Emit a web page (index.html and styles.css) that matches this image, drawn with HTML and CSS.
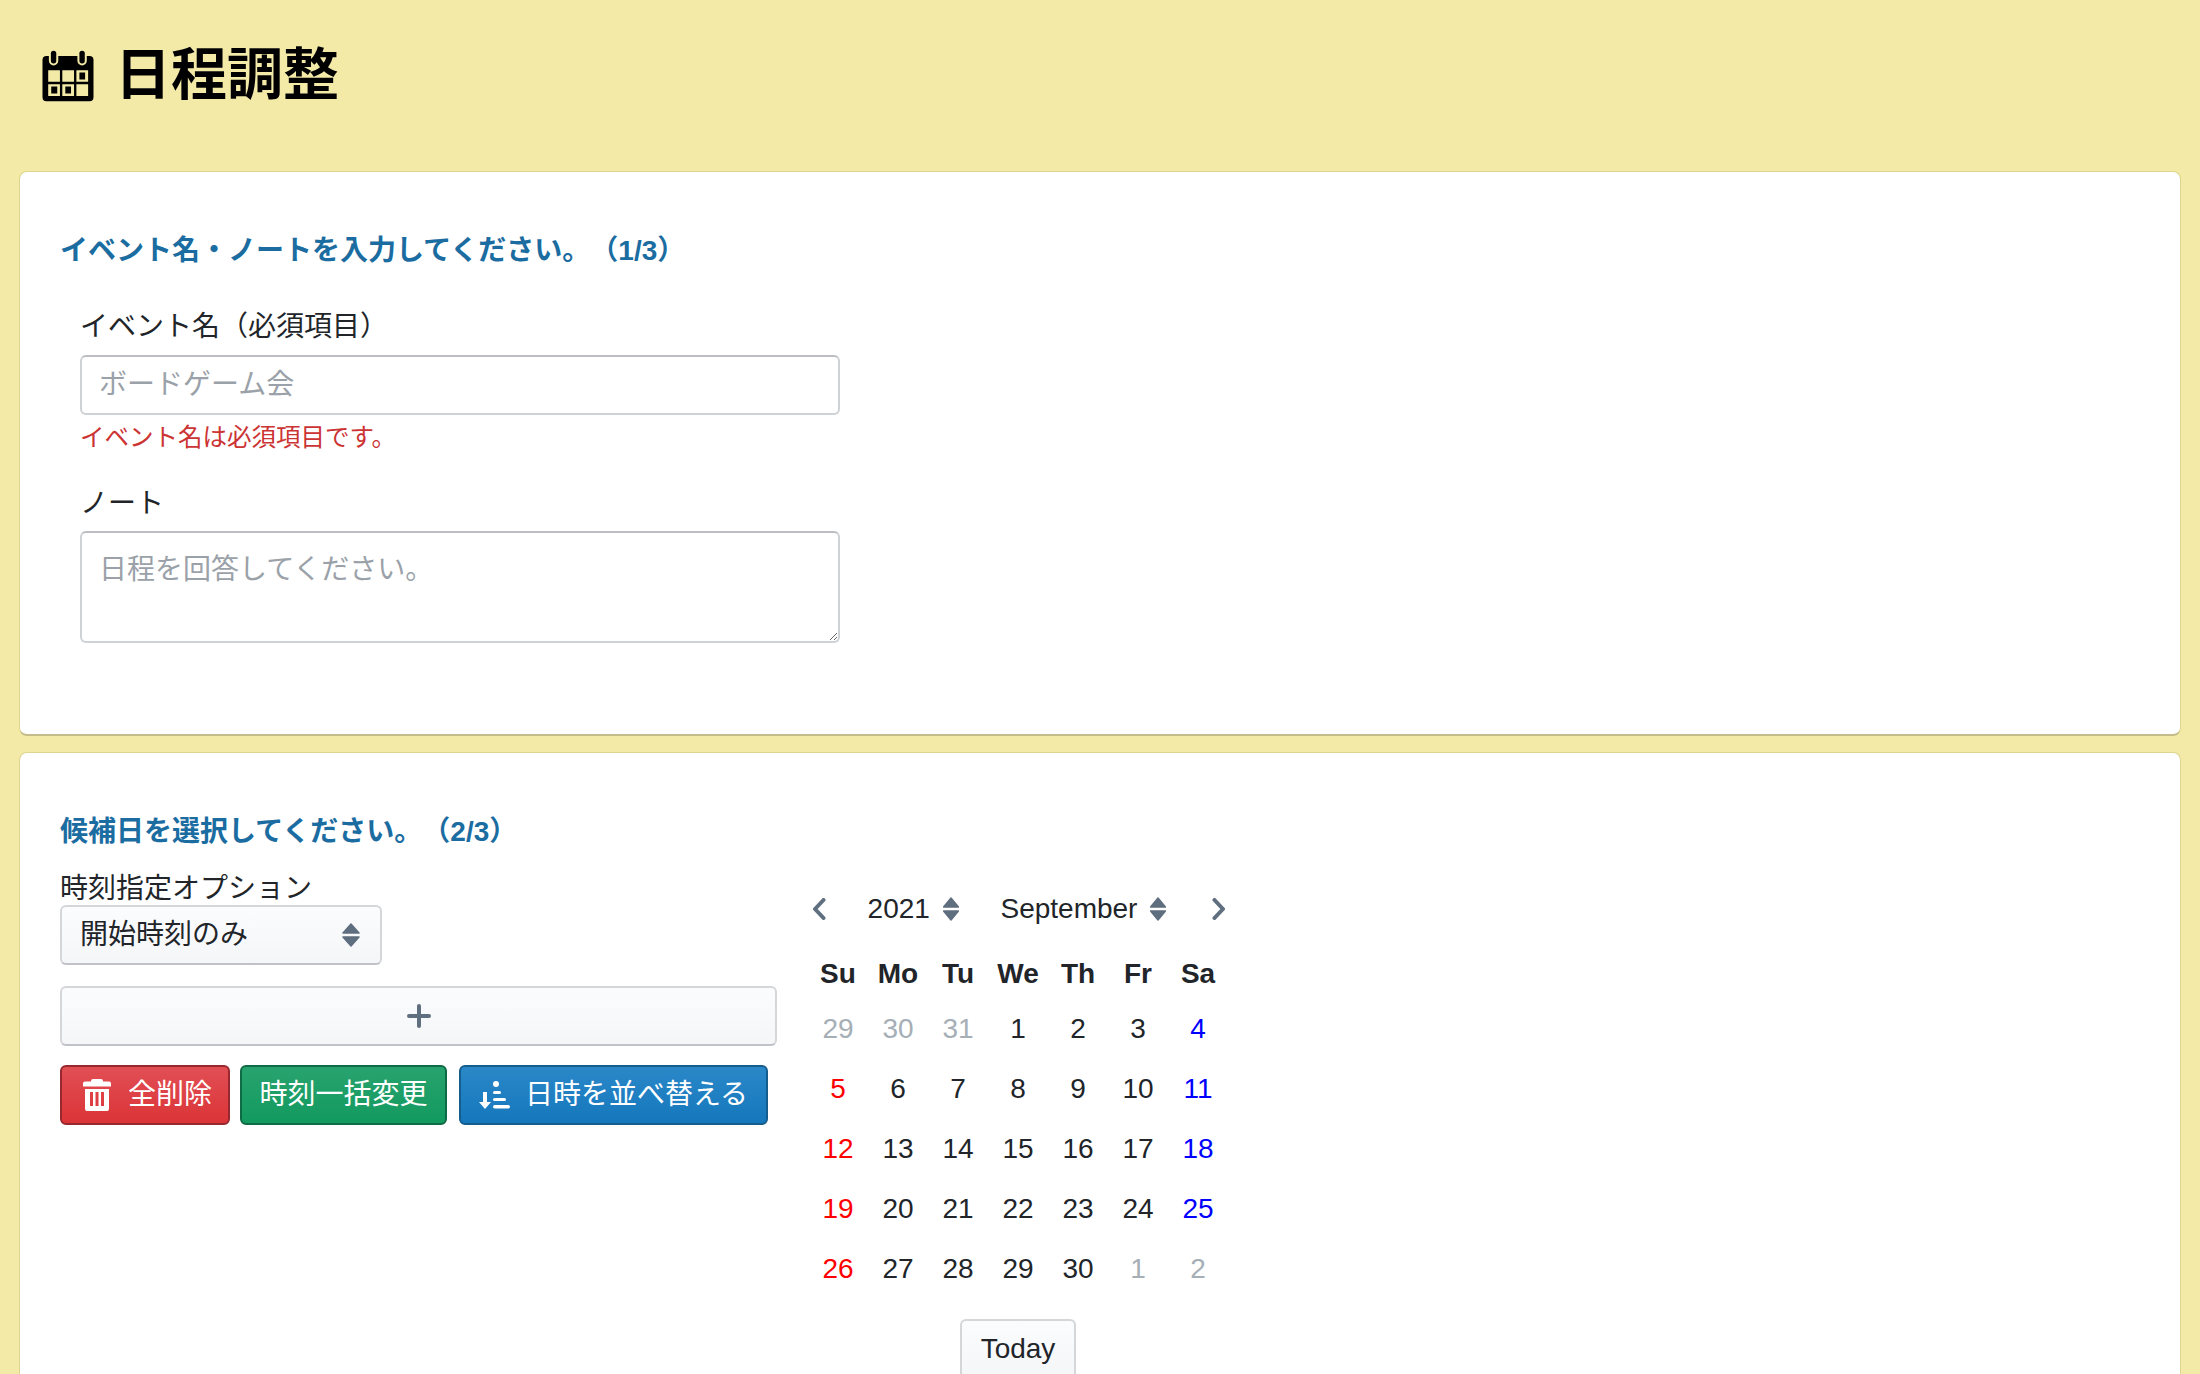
FILE: index.html
```html
<!DOCTYPE html>
<html lang="ja">
<head>
  <meta charset="UTF-8">
  <title>日程調整</title>
  <link rel="stylesheet" href="styles.css">
</head>
<body>

  <svg class="defs" aria-hidden="true">
    <symbol id="updown" viewBox="0 0 16 24">
      <path d="M8 1 15.500 10H.5Z M.5 14H15.500L8 23Z" fill="#5f6f7f" stroke="#5f6f7f" stroke-width="1.5" stroke-linejoin="round"/>
    </symbol>
  </svg>

  <header class="page-header">
    <svg class="logo" viewBox="68 60 152 155">
      <path fill="#000" fill-rule="evenodd" d="M80 78H208Q220 78 220 90V201Q220 213 208 213H80Q68 213 68 201V90Q68 78 80 78ZM85 120V155H120V120ZM127 120V155H162V120ZM169 120V155H204V120ZM85 162V197H120V162ZM127 162V197H162V162ZM169 162V197H204V162Z"/>
      <path fill="#000" d="M178 127H195V148H178ZM94 169H112V190H94ZM136 169H153V190H136Z"/>
      <rect x="87" y="58" width="28" height="48" rx="14" fill="#f3eaa8"/>
      <rect x="172" y="58" width="28" height="48" rx="14" fill="#f3eaa8"/>
      <rect x="93" y="62" width="16" height="38" rx="8" fill="#000"/>
      <rect x="178" y="62" width="16" height="38" rx="8" fill="#000"/>
    </svg>
    <h1>日程調整</h1>
  </header>

  <section class="card card-event">
    <h2>イベント名・ノートを入力してください。（1/3）</h2>
    <div class="form-block">
      <label for="eventName">イベント名（必須項目）</label>
      <input type="text" id="eventName" class="field" placeholder="ボードゲーム会">
      <p class="error">イベント名は必須項目です。</p>
      <label for="note" class="note-label">ノート</label>
      <textarea id="note" class="field note" placeholder="日程を回答してください。"></textarea>
    </div>
  </section>

  <section class="card card-dates">
    <h2>候補日を選択してください。（2/3）</h2>
    <div class="dates-row">

      <div class="dates-left">
        <label for="timeOption">時刻指定オプション</label>
        <select id="timeOption" class="time-select">
          <option>開始時刻のみ</option>
        </select>
        <button class="add-btn" aria-label="追加">
          <svg width="24" height="24" viewBox="0 0 24 24"><path d="M12 2V22M2 12H22" stroke="#5f6f7f" stroke-width="4" stroke-linecap="round"/></svg>
        </button>
        <div class="actions">
          <button class="btn btn-red">
            <svg width="28" height="32" viewBox="0 0 28 32">
              <path fill="#fff" fill-rule="evenodd" d="M8 2Q8 0 10 0H18Q20 0 20 2V2.500H26Q28 2.500 28 4.500V7.500H0V4.500Q0 2.500 2 2.500H8ZM2 10H26V30Q26 32 24 32H4Q2 32 2 30ZM7 13V27H10V13ZM12.500 13V27H15.500V13ZM18 13V27H21V13Z"/>
            </svg>
            全削除
          </button>
          <button class="btn btn-green">時刻一括変更</button>
          <button class="btn btn-blue">
            <svg width="32" height="28" viewBox="0 0 32 28">
              <path fill="#fff" d="M4 11H8V21H12L6 28 0 21H4Z"/>
              <circle cx="17" cy="3" r="3" fill="#fff"/>
              <rect x="14" y="10" width="8" height="3" rx="1.500" fill="#fff"/>
              <rect x="14" y="17" width="13" height="3" rx="1.500" fill="#fff"/>
              <rect x="14" y="24" width="17" height="3.500" rx="1.700" fill="#fff"/>
            </svg>
            日時を並べ替える
          </button>
        </div>
      </div>

      <div class="calendar">
        <div class="cal-nav">
          <svg width="14" height="22" viewBox="0 0 14 22"><path d="M11.500 2 3 11 11.500 20" fill="none" stroke="#5f6f7f" stroke-width="4" stroke-linecap="round" stroke-linejoin="round"/></svg>
          <span class="cal-pick cal-year">2021 <svg width="16" height="24"><use href="#updown"/></svg></span>
          <span class="cal-pick cal-month">September <svg width="16" height="24"><use href="#updown"/></svg></span>
          <svg width="14" height="22" viewBox="0 0 14 22"><path d="M2.500 2 11 11 2.500 20" fill="none" stroke="#5f6f7f" stroke-width="4" stroke-linecap="round" stroke-linejoin="round"/></svg>
        </div>
        <div class="cal-grid">
          <b>Su</b><b>Mo</b><b>Tu</b><b>We</b><b>Th</b><b>Fr</b><b>Sa</b>
          <span class="muted">29</span><span class="muted">30</span><span class="muted">31</span><span>1</span><span>2</span><span>3</span><span class="sat">4</span>
          <span class="sun">5</span><span>6</span><span>7</span><span>8</span><span>9</span><span>10</span><span class="sat">11</span>
          <span class="sun">12</span><span>13</span><span>14</span><span>15</span><span>16</span><span>17</span><span class="sat">18</span>
          <span class="sun">19</span><span>20</span><span>21</span><span>22</span><span>23</span><span>24</span><span class="sat">25</span>
          <span class="sun">26</span><span>27</span><span>28</span><span>29</span><span>30</span><span class="muted">1</span><span class="muted">2</span>
        </div>
        <div class="cal-foot">
          <button class="today-btn">Today</button>
        </div>
      </div>

    </div>
  </section>

</body>
</html>
```

FILE: styles.css
```css
html, body { height: 100%; overflow: hidden; }
body { margin: 0; background: #f3eaa8; color: #212529; font-family: "Liberation Sans", "Noto Sans CJK JP", sans-serif; font-size: 28px; line-height: 42px; text-spacing-trim: space-all; }
.defs { display: none; }

.page-header { height: 171px; box-sizing: border-box; padding: 50px 0 0 42px; display: flex; gap: 21px; align-items: flex-start; }
.logo { width: 52px; height: 52px; }
h1 { margin: -5px 0 0; font-size: 56px; line-height: 60px; color: #000; }

.card { margin: 0 19px 19px; background: #fff; border: 1px solid #ded68f; border-bottom: 2px solid #c4bc8a; border-radius: 8px; padding: 0 40px; }
.card-event { height: 565px; margin-bottom: 16px; box-sizing: border-box; padding-top: 58px; }
.card-dates { padding-top: 58px; padding-bottom: 100px; }
h2 { margin: 0; font-size: 28px; line-height: 42px; color: #1a6ca1; }

label { display: block; }
.form-block { padding: 34px 0 0 20px; width: 760px; }
.field { display: block; width: 100%; box-sizing: border-box; margin-top: 7px; padding: 8px 17px; border: 2px solid #cfd2d5; border-top-color: #bbbdc0; border-radius: 6px; font: inherit; color: #212529; height: 60px; background: #fff; }
.field::placeholder { color: #9aa1a8; }
.note { height: 112px; margin-top: 6px; padding-top: 16px; }
.error { margin: 6px 0 0; font-size: 24.5px; line-height: 34px; color: #cc3333; }
.note-label { margin-top: 28px; }

.dates-row { display: flex; gap: 31px; padding-top: 15px; }
.dates-left { width: 717px; }
.time-select { display: block; width: 322px; height: 60px; margin-top: -5px; padding: 0 18px; border: 2px solid #d4d6d9; border-bottom-color: #bfc2c6; border-radius: 6px; font: inherit; color: #212529; appearance: none; background: url("data:image/svg+xml,%3Csvg xmlns='http://www.w3.org/2000/svg' width='18' height='24'%3E%3Cpath d='M9 1 17 10H1Z M1 14H17L9 23Z' fill='%235f6f7f' stroke='%235f6f7f' stroke-width='1.500' stroke-linejoin='round'/%3E%3C/svg%3E") no-repeat right 20px center, linear-gradient(#fbfcfd, #f5f6f8); }
.add-btn { display: flex; align-items: center; justify-content: center; width: 100%; height: 60px; margin-top: 21px; padding: 0; border: 2px solid #d4d6d9; border-bottom-color: #bfc2c6; border-radius: 6px; background: linear-gradient(#fbfcfd, #f5f6f8); }
.actions { display: flex; gap: 10px; margin-top: 19px; }
.btn { display: flex; align-items: center; justify-content: center; gap: 17px; height: 60px; padding: 0; border-width: 2px; border-style: solid; border-radius: 6px; font: inherit; color: #fff; white-space: nowrap; }
.btn svg { flex-shrink: 0; }
.btn-red { width: 170px; justify-content: flex-start; padding-left: 21px; border-color: #98282f; background: linear-gradient(#e14f55, #db3437); }
.btn-green { width: 207px; margin-right: 2px; border-color: #0f6b45; background: linear-gradient(#28a36f, #129a5f); }
.btn-blue { width: 309px; gap: 14px; border-color: #145d8d; background: linear-gradient(#2a88c8, #1577bc); }

.calendar { width: 420px; }
.cal-nav { display: flex; align-items: center; justify-content: space-between; height: 42px; margin-top: 20px; padding: 0 2px 0 4px; }
.cal-pick { display: flex; align-items: center; gap: 13px; }
.cal-month { margin-right: 4px; }
.cal-grid { display: grid; grid-template-columns: repeat(7, 60px); grid-template-rows: 55px; grid-auto-rows: 60px; margin-top: 14px; text-align: center; line-height: 60px; }
.muted { color: #a6aeb6; }
.sun { color: #ff0000; }
.sat { color: #0000ff; }
.cal-foot { display: flex; justify-content: center; margin-top: 20px; }
.today-btn { width: 116px; height: 60px; padding: 0; border: 2px solid #d4d6d9; border-bottom-color: #bfc2c6; border-radius: 6px; font: inherit; color: #212529; background: linear-gradient(#fbfcfd, #f5f6f8); }
```
